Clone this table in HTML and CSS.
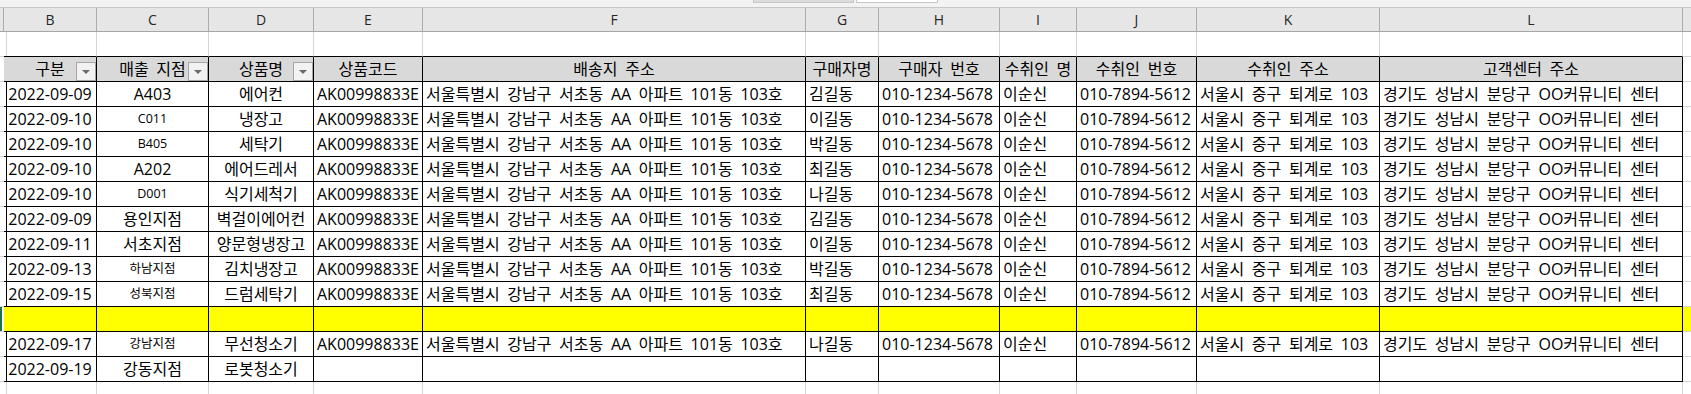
FILE: index.html
```html
<!DOCTYPE html>
<html lang="ko">
<head>
<meta charset="utf-8">
<title>Sheet</title>
<link rel="stylesheet" href="styles.css">
</head>
<body>
<div class="topbar"><div class="tb-a"></div><div class="tb-b"></div></div>
<div class="sheet">
  <div class="row colhdr">
    <div class="ch"></div><div class="ch">B</div><div class="ch">C</div><div class="ch">D</div><div class="ch">E</div><div class="ch">F</div><div class="ch">G</div><div class="ch">H</div><div class="ch">I</div><div class="ch">J</div><div class="ch">K</div><div class="ch">L</div><div class="ch end"></div>
  </div>
  <div class="row above">
    <div class="c rh"></div><div class="c"></div><div class="c"></div><div class="c"></div><div class="c"></div><div class="c"></div><div class="c"></div><div class="c"></div><div class="c"></div><div class="c"></div><div class="c"></div><div class="c"></div><div class="c m"></div>
  </div>
  <div class="row tr thead">
    <div class="c rh"></div>
    <div class="c t ctr">구분<span class="flt"></span></div>
    <div class="c t ctr">매출 지점<span class="flt"></span></div>
    <div class="c t ctr">상품명<span class="flt"></span></div>
    <div class="c t ctr">상품코드</div>
    <div class="c t ctr">배송지 주소</div>
    <div class="c t ctr">구매자명</div>
    <div class="c t ctr">구매자 번호</div>
    <div class="c t ctr">수취인 명</div>
    <div class="c t ctr">수취인 번호</div>
    <div class="c t ctr">수취인 주소</div>
    <div class="c t ctr">고객센터 주소</div>
    <div class="c m"></div>
  </div>

  <div class="row tr">
    <div class="c rh"></div><div class="c t ctr">2022-09-09</div><div class="c t ctr">A403</div><div class="c t ctr">에어컨</div><div class="c t ctr">AK00998833E</div><div class="c t">서울특별시 강남구 서초동 AA 아파트 101동 103호</div><div class="c t">김길동</div><div class="c t">010-1234-5678</div><div class="c t">이순신</div><div class="c t">010-7894-5612</div><div class="c t">서울시 중구 퇴계로 103</div><div class="c t">경기도 성남시 분당구 OO커뮤니티 센터</div><div class="c m"></div>
  </div>
  <div class="row tr">
    <div class="c rh"></div><div class="c t ctr">2022-09-10</div><div class="c t ctr sm">C011</div><div class="c t ctr">냉장고</div><div class="c t ctr">AK00998833E</div><div class="c t">서울특별시 강남구 서초동 AA 아파트 101동 103호</div><div class="c t">이길동</div><div class="c t">010-1234-5678</div><div class="c t">이순신</div><div class="c t">010-7894-5612</div><div class="c t">서울시 중구 퇴계로 103</div><div class="c t">경기도 성남시 분당구 OO커뮤니티 센터</div><div class="c m"></div>
  </div>
  <div class="row tr">
    <div class="c rh"></div><div class="c t ctr">2022-09-10</div><div class="c t ctr sm">B405</div><div class="c t ctr">세탁기</div><div class="c t ctr">AK00998833E</div><div class="c t">서울특별시 강남구 서초동 AA 아파트 101동 103호</div><div class="c t">박길동</div><div class="c t">010-1234-5678</div><div class="c t">이순신</div><div class="c t">010-7894-5612</div><div class="c t">서울시 중구 퇴계로 103</div><div class="c t">경기도 성남시 분당구 OO커뮤니티 센터</div><div class="c m"></div>
  </div>
  <div class="row tr">
    <div class="c rh"></div><div class="c t ctr">2022-09-10</div><div class="c t ctr">A202</div><div class="c t ctr">에어드레서</div><div class="c t ctr">AK00998833E</div><div class="c t">서울특별시 강남구 서초동 AA 아파트 101동 103호</div><div class="c t">최길동</div><div class="c t">010-1234-5678</div><div class="c t">이순신</div><div class="c t">010-7894-5612</div><div class="c t">서울시 중구 퇴계로 103</div><div class="c t">경기도 성남시 분당구 OO커뮤니티 센터</div><div class="c m"></div>
  </div>
  <div class="row tr">
    <div class="c rh"></div><div class="c t ctr">2022-09-10</div><div class="c t ctr sm">D001</div><div class="c t ctr">식기세척기</div><div class="c t ctr">AK00998833E</div><div class="c t">서울특별시 강남구 서초동 AA 아파트 101동 103호</div><div class="c t">나길동</div><div class="c t">010-1234-5678</div><div class="c t">이순신</div><div class="c t">010-7894-5612</div><div class="c t">서울시 중구 퇴계로 103</div><div class="c t">경기도 성남시 분당구 OO커뮤니티 센터</div><div class="c m"></div>
  </div>
  <div class="row tr">
    <div class="c rh"></div><div class="c t ctr">2022-09-09</div><div class="c t ctr">용인지점</div><div class="c t ctr">벽걸이에어컨</div><div class="c t ctr">AK00998833E</div><div class="c t">서울특별시 강남구 서초동 AA 아파트 101동 103호</div><div class="c t">김길동</div><div class="c t">010-1234-5678</div><div class="c t">이순신</div><div class="c t">010-7894-5612</div><div class="c t">서울시 중구 퇴계로 103</div><div class="c t">경기도 성남시 분당구 OO커뮤니티 센터</div><div class="c m"></div>
  </div>
  <div class="row tr">
    <div class="c rh"></div><div class="c t ctr">2022-09-11</div><div class="c t ctr">서초지점</div><div class="c t ctr">양문형냉장고</div><div class="c t ctr">AK00998833E</div><div class="c t">서울특별시 강남구 서초동 AA 아파트 101동 103호</div><div class="c t">이길동</div><div class="c t">010-1234-5678</div><div class="c t">이순신</div><div class="c t">010-7894-5612</div><div class="c t">서울시 중구 퇴계로 103</div><div class="c t">경기도 성남시 분당구 OO커뮤니티 센터</div><div class="c m"></div>
  </div>
  <div class="row tr">
    <div class="c rh"></div><div class="c t ctr">2022-09-13</div><div class="c t ctr sm">하남지점</div><div class="c t ctr">김치냉장고</div><div class="c t ctr">AK00998833E</div><div class="c t">서울특별시 강남구 서초동 AA 아파트 101동 103호</div><div class="c t">박길동</div><div class="c t">010-1234-5678</div><div class="c t">이순신</div><div class="c t">010-7894-5612</div><div class="c t">서울시 중구 퇴계로 103</div><div class="c t">경기도 성남시 분당구 OO커뮤니티 센터</div><div class="c m"></div>
  </div>
  <div class="row tr">
    <div class="c rh"></div><div class="c t ctr">2022-09-15</div><div class="c t ctr sm">성북지점</div><div class="c t ctr">드럼세탁기</div><div class="c t ctr">AK00998833E</div><div class="c t">서울특별시 강남구 서초동 AA 아파트 101동 103호</div><div class="c t">최길동</div><div class="c t">010-1234-5678</div><div class="c t">이순신</div><div class="c t">010-7894-5612</div><div class="c t">서울시 중구 퇴계로 103</div><div class="c t">경기도 성남시 분당구 OO커뮤니티 센터</div><div class="c m"></div>
  </div>
  <div class="row tr hl">
    <div class="c rh sel"></div><div class="c t"></div><div class="c t"></div><div class="c t"></div><div class="c t"></div><div class="c t"></div><div class="c t"></div><div class="c t"></div><div class="c t"></div><div class="c t"></div><div class="c t"></div><div class="c t"></div><div class="c m"></div>
  </div>
  <div class="row tr">
    <div class="c rh"></div><div class="c t ctr">2022-09-17</div><div class="c t ctr sm">강남지점</div><div class="c t ctr">무선청소기</div><div class="c t ctr">AK00998833E</div><div class="c t">서울특별시 강남구 서초동 AA 아파트 101동 103호</div><div class="c t">나길동</div><div class="c t">010-1234-5678</div><div class="c t">이순신</div><div class="c t">010-7894-5612</div><div class="c t">서울시 중구 퇴계로 103</div><div class="c t">경기도 성남시 분당구 OO커뮤니티 센터</div><div class="c m"></div>
  </div>
  <div class="row tr">
    <div class="c rh"></div><div class="c t ctr">2022-09-19</div><div class="c t ctr">강동지점</div><div class="c t ctr">로봇청소기</div><div class="c t"></div><div class="c t"></div><div class="c t"></div><div class="c t"></div><div class="c t"></div><div class="c t"></div><div class="c t"></div><div class="c t"></div><div class="c m"></div>
  </div>
  <div class="row">
    <div class="c rh"></div><div class="c"></div><div class="c"></div><div class="c"></div><div class="c"></div><div class="c"></div><div class="c"></div><div class="c"></div><div class="c"></div><div class="c"></div><div class="c"></div><div class="c"></div><div class="c m"></div>
  </div>
</div>
</body>
</html>
```

FILE: styles.css
```css
:root {
  --cols: 4px 93px 112px 105px 109px 383px 73px 121px 77px 120px 183px 303px 1fr;
  --grid: #d4d4d4;
}
html, body {
  margin: 0;
  padding: 0;
  background: #ffffff;
  overflow: hidden;
}
body {
  font-family: "Open Sans", "Noto Sans CJK KR", sans-serif;
  color: #000;
}
.topbar {
  box-sizing: border-box;
  height: 8px;
  background: #f3f3f3;
  border-bottom: 1px solid #c6c6c6;
  display: flex;
  padding-left: 753px;
  gap: 2px;
}
.tb-a {
  width: 101px;
  height: 3px;
  background: #dcdcdc;
  box-sizing: border-box;
  border: 1px solid #c8c8c8;
  border-top: 0;
}
.tb-b {
  width: 82px;
  height: 3px;
  background: #ffffff;
  box-sizing: border-box;
  border: 1px solid #c8c8c8;
  border-top: 0;
}
.row {
  display: grid;
  grid-template-columns: var(--cols);
  height: 25px;
}
.colhdr {
  height: 24px;
  background: #e6e6e6;
}
.ch {
  box-sizing: border-box;
  border-right: 1px solid #ababab;
  border-bottom: 1px solid #a6a6a6;
  font-size: 14px;
  color: #262626;
  display: flex;
  align-items: center;
  justify-content: center;
  line-height: 1;
}
.ch.end { border-right: 0; }
.c {
  box-sizing: border-box;
  border-right: 1px solid var(--grid);
  border-bottom: 1px solid var(--grid);
  font-size: 16px;
  line-height: 24px;
  word-spacing: 3.5px;
  padding: 0 3px;
  white-space: nowrap;
  overflow: hidden;
  display: flex;
  align-items: center;
  position: relative;
}
.c.m { border-right: 0; }
.above .c:not(.rh):not(.m) { border-bottom-color: #000; }
.tr .rh { border-right-color: #000; }
.c.t {
  border-right-color: #000;
  border-bottom-color: #000;
}
.c.ctr { justify-content: center; }
.c.sm { font-size: 12.5px; padding-bottom: 1px; }
.thead .c.t { background: #d9d9d9; }
.hl .c { background: #ffff00; }
.hl .c.rh { background: #ffffff; }
.sel::before {
  content: "";
  position: absolute;
  left: 0;
  top: -1px;
  width: 2px;
  height: 26px;
  background: #217346;
}
.flt {
  position: absolute;
  right: 0;
  bottom: 0;
  width: 20px;
  height: 19px;
  box-sizing: border-box;
  background: #f2f2f2;
  border: 1px solid #a6a6a6;
}
.flt::after {
  content: "";
  position: absolute;
  left: 5px;
  top: 7px;
  border-left: 4px solid transparent;
  border-right: 4px solid transparent;
  border-top: 4px solid #6b6b6b;
}
```
